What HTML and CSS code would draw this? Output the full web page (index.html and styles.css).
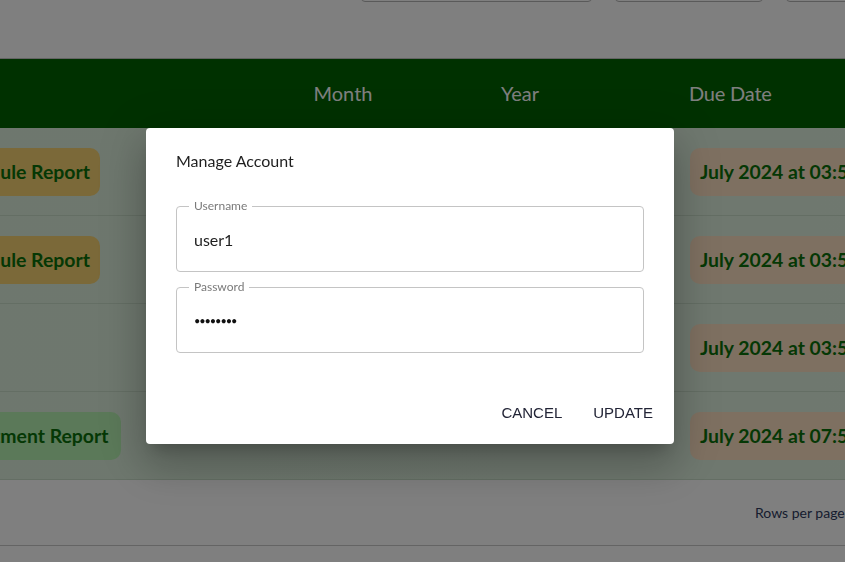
FILE: index.html
```html
<!DOCTYPE html>
<html lang="en">
<head>
<meta charset="utf-8">
<title>Reports</title>
<link rel="stylesheet" href="styles.css">
</head>
<body>
<div class="page">
  <div class="toolbar">
    <div class="filter f1"></div>
    <div class="filter f2"></div>
    <div class="filter f3"></div>
  </div>
  <div class="table">
    <div class="row head">
      <div class="cell c1"></div>
      <div class="cell c2">Month</div>
      <div class="cell c3">Year</div>
      <div class="cell c4">Due Date</div>
    </div>
    <div class="row">
      <div class="cell c1"><span class="badge amber">Schedule Report</span></div>
      <div class="cell c2"></div>
      <div class="cell c3"></div>
      <div class="cell c4"><span class="badge peach">July 2024 at 03:55 PM</span></div>
    </div>
    <div class="row">
      <div class="cell c1"><span class="badge amber">Schedule Report</span></div>
      <div class="cell c2"></div>
      <div class="cell c3"></div>
      <div class="cell c4"><span class="badge peach">July 2024 at 03:55 PM</span></div>
    </div>
    <div class="row">
      <div class="cell c1"></div>
      <div class="cell c2"></div>
      <div class="cell c3"></div>
      <div class="cell c4"><span class="badge peach">July 2024 at 03:55 PM</span></div>
    </div>
    <div class="row">
      <div class="cell c1"><span class="badge mint">Investment Report</span></div>
      <div class="cell c2"></div>
      <div class="cell c3"></div>
      <div class="cell c4"><span class="badge peach">July 2024 at 07:55 PM</span></div>
    </div>
    <div class="footer">
      <span class="rpp">Rows per page:</span>
      <span class="rpp-val">10</span>
      <span class="count">1–4 of 4</span>
    </div>
  </div>
</div>

<div class="backdrop"></div>
<div class="dialog">
  <div class="dialog-body">
    <h2 class="title">Manage Account</h2>
    <div class="field">
      <span class="label">Username</span>
      <span class="value">user1</span>
    </div>
    <div class="field">
      <span class="label">Password</span>
      <span class="value dots">••••••••</span>
    </div>
  </div>
  <div class="actions">
    <button class="btn">CANCEL</button>
    <button class="btn">UPDATE</button>
  </div>
</div>
</body>
</html>
```

FILE: styles.css
```css
* { box-sizing: border-box; }
html, body { margin: 0; padding: 0; }
body {
  width: 845px;
  height: 562px;
  overflow: hidden;
  background: #ffffff;
  font-family: "Lato", "Noto Sans", "Liberation Sans", sans-serif;
}
.page { width: 1100px; }

.toolbar {
  height: 59px;
  display: flex;
  gap: 23px;
  padding-left: 361px;
  border-bottom: 1px solid #c6c6c6;
}
.filter {
  height: 40px;
  margin-top: -38px;
  border: 1px solid #b4b4b4;
  border-radius: 4px;
}
.f1 { width: 231px; }
.f2 { width: 148px; }
.f3 { width: 200px; }

.table { margin-left: -62px; width: 1162px; }
.row {
  display: grid;
  grid-template-columns: 315px 180px 174px 493px;
  height: 88px;
  background: linear-gradient(90deg, #dcefdc, #e0f1e0);
  border-bottom: 1px solid #c9dcc9;
  align-items: center;
}
.row.head {
  height: 69px;
  padding-bottom: 2px;
  background: #006200;
  border-bottom: none;
  color: #ffffff;
  font-size: 20px;
}
.cell.c2, .cell.c3 { text-align: center; }
.cell.c4 { padding-left: 83px; }
.head .cell.c4 { padding-left: 82px; letter-spacing: -0.2px; }
.cell.c1 { padding-left: 0; }

.badge {
  display: inline-block;
  height: 48px;
  line-height: 47px;
  padding: 0 10px;
  border-radius: 10px;
  font-weight: 700;
  font-size: 19.4px;
  color: #0a700a;
  white-space: nowrap;
}
.amber { background: #f6d272; }
.peach { background: #fce0c2; }
.mint { background: #b6f2b2; padding-right: 13px; }

.footer {
  height: 66px;
  display: flex;
  align-items: center;
  padding-left: 817px;
  gap: 24px;
  border-bottom: 1px solid #c8c8c8;
  font-size: 14px;
  color: #2e3a5e;
}

.backdrop {
  position: fixed;
  inset: 0;
  background: rgba(0, 0, 0, 0.5);
}

.dialog {
  position: absolute;
  left: 146px;
  top: 128px;
  width: 528px;
  height: 316px;
  background: #ffffff;
  border-radius: 4px;
  box-shadow: 0 11px 15px -7px rgba(0,0,0,0.2), 0 24px 38px 3px rgba(0,0,0,0.14), 0 9px 46px 8px rgba(0,0,0,0.12);
  display: flex;
  flex-direction: column;
}
.dialog-body { padding: 23px 30px 0; }
.title {
  margin: 0 0 35px;
  font-size: 16px;
  line-height: 20px;
  font-weight: 400;
  color: #1f1f1f;
}
.field {
  position: relative;
  height: 66px;
  border: 1px solid #c4c4c4;
  border-radius: 4px;
  display: flex;
  align-items: center;
  padding-left: 17px;
  margin-bottom: 15px;
}
.field:last-child { margin-bottom: 0; }
.label {
  position: absolute;
  top: -9px;
  left: 12px;
  padding: 0 5px;
  background: #ffffff;
  font-size: 12px;
  line-height: 16px;
  color: #7a7a7a;
}
.value { font-size: 16px; color: #1e1e1e; }
.dots { font-size: 11px; letter-spacing: -1.1px; color: #111; }

.actions {
  margin-top: auto;
  display: flex;
  justify-content: flex-end;
  gap: 15px;
  padding: 0 13px 17px;
}
.btn {
  font-family: "Liberation Sans", Arial, sans-serif;
  font-size: 15px;
  line-height: 17px;
  padding: 6px 8px;
  border: none;
  background: transparent;
  color: #222436;
}
```
